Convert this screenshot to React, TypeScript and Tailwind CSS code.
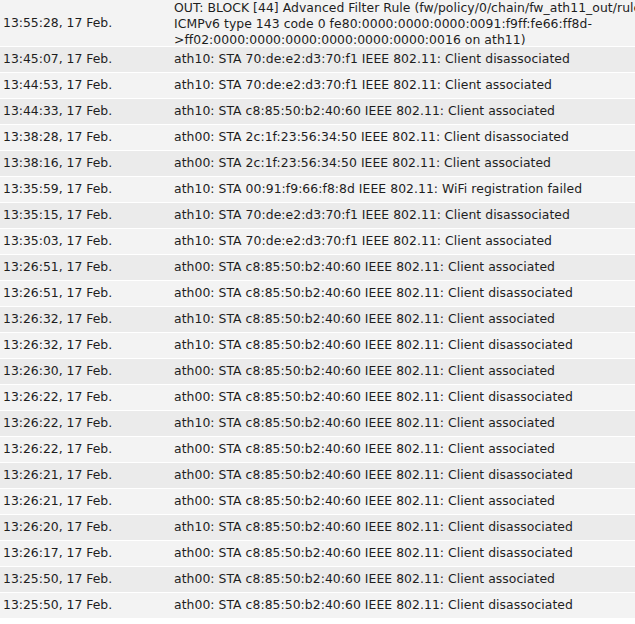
import React from "react";

const rows: [string, string][] = [
  ["13:45:07, 17 Feb.", "ath10: STA 70:de:e2:d3:70:f1 IEEE 802.11: Client disassociated"],
  ["13:44:53, 17 Feb.", "ath10: STA 70:de:e2:d3:70:f1 IEEE 802.11: Client associated"],
  ["13:44:33, 17 Feb.", "ath10: STA c8:85:50:b2:40:60 IEEE 802.11: Client associated"],
  ["13:38:28, 17 Feb.", "ath00: STA 2c:1f:23:56:34:50 IEEE 802.11: Client disassociated"],
  ["13:38:16, 17 Feb.", "ath00: STA 2c:1f:23:56:34:50 IEEE 802.11: Client associated"],
  ["13:35:59, 17 Feb.", "ath10: STA 00:91:f9:66:f8:8d IEEE 802.11: WiFi registration failed"],
  ["13:35:15, 17 Feb.", "ath10: STA 70:de:e2:d3:70:f1 IEEE 802.11: Client disassociated"],
  ["13:35:03, 17 Feb.", "ath10: STA 70:de:e2:d3:70:f1 IEEE 802.11: Client associated"],
  ["13:26:51, 17 Feb.", "ath00: STA c8:85:50:b2:40:60 IEEE 802.11: Client associated"],
  ["13:26:51, 17 Feb.", "ath00: STA c8:85:50:b2:40:60 IEEE 802.11: Client disassociated"],
  ["13:26:32, 17 Feb.", "ath10: STA c8:85:50:b2:40:60 IEEE 802.11: Client associated"],
  ["13:26:32, 17 Feb.", "ath10: STA c8:85:50:b2:40:60 IEEE 802.11: Client disassociated"],
  ["13:26:30, 17 Feb.", "ath00: STA c8:85:50:b2:40:60 IEEE 802.11: Client associated"],
  ["13:26:22, 17 Feb.", "ath00: STA c8:85:50:b2:40:60 IEEE 802.11: Client disassociated"],
  ["13:26:22, 17 Feb.", "ath10: STA c8:85:50:b2:40:60 IEEE 802.11: Client associated"],
  ["13:26:22, 17 Feb.", "ath00: STA c8:85:50:b2:40:60 IEEE 802.11: Client associated"],
  ["13:26:21, 17 Feb.", "ath00: STA c8:85:50:b2:40:60 IEEE 802.11: Client disassociated"],
  ["13:26:21, 17 Feb.", "ath00: STA c8:85:50:b2:40:60 IEEE 802.11: Client associated"],
  ["13:26:20, 17 Feb.", "ath10: STA c8:85:50:b2:40:60 IEEE 802.11: Client disassociated"],
  ["13:26:17, 17 Feb.", "ath00: STA c8:85:50:b2:40:60 IEEE 802.11: Client disassociated"],
  ["13:25:50, 17 Feb.", "ath00: STA c8:85:50:b2:40:60 IEEE 802.11: Client associated"],
  ["13:25:50, 17 Feb.", "ath00: STA c8:85:50:b2:40:60 IEEE 802.11: Client disassociated"],
];

export default function App() {
  return (
    <div
      className="w-[635px] h-[624px] overflow-hidden bg-white text-[12.4px] text-[#1e1e1e]"
      style={{ fontFamily: '"DejaVu Sans", Verdana, sans-serif' }}
    >
      <div className="flex flex-col gap-px">
        <div className="flex h-[46px] items-center bg-[#f3f3f3] overflow-hidden">
          <div className="w-[174px] shrink-0 pl-[3px] whitespace-nowrap">13:55:28, 17 Feb.</div>
          <div className="flex-1 min-w-0 leading-[16px] whitespace-nowrap overflow-hidden pt-[2px] tracking-[0.05px]">
            <div>OUT: BLOCK [44] Advanced Filter Rule (fw/policy/0/chain/fw_ath11_out/rule/0)</div>
            <div>ICMPv6 type 143 code 0 fe80:0000:0000:0000:0091:f9ff:fe66:ff8d-</div>
            <div>&gt;ff02:0000:0000:0000:0000:0000:0000:0016 on ath11)</div>
          </div>
        </div>
        {rows.map(([t, m], i) => (
          <div
            key={i}
            className={`flex h-[25px] items-center whitespace-nowrap ${i % 2 === 0 ? "bg-[#ebebeb]" : "bg-[#f3f3f3]"}`}
          >
            <div className="w-[174px] shrink-0 pl-[3px]">{t}</div>
            <div className="flex-1 min-w-0 tracking-[0.05px]">{m}</div>
          </div>
        ))}
      </div>
    </div>
  );
}
